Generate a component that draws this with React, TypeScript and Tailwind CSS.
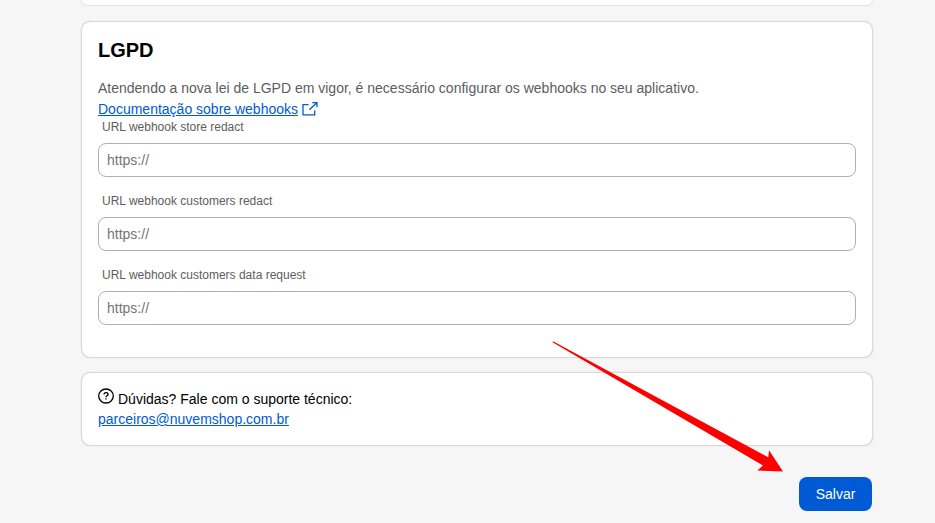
import { ReactNode } from "react";

const cardStyle = "rounded-lg bg-white p-4 shadow-[0_0_2px_0_#888888]";

function Card({ children }: { children: ReactNode }) {
  return <section className={cardStyle}>{children}</section>;
}

function ExternalLinkIcon() {
  return (
    <svg
      viewBox="0 0 16 16"
      className="h-4 w-4 shrink-0"
      fill="none"
      stroke="currentColor"
      strokeWidth="1.3"
      aria-hidden="true"
    >
      <path d="M6.5 3.6H1v10.2h11.7V9.5" />
      <path d="M10.3 1.6h4.7v4.6M14.8 1.8L7.4 8.7" />
    </svg>
  );
}

function QuestionCircleIcon() {
  return (
    <svg
      viewBox="0 1 16 16"
      className="h-4 w-4 shrink-0 overflow-visible"
      fill="none"
      stroke="currentColor"
      strokeWidth="1.3"
      aria-hidden="true"
    >
      <ellipse cx="8" cy="8" rx="7.3" ry="7" />
      <path d="M6 6.6C6 5.4 6.9 4.7 8 4.7s2 .7 2 1.7c0 1.3-2 1.4-2 2.8" />
      <path d="M8 10.2v1.4" />
    </svg>
  );
}

function UrlField({ id, label }: { id: string; label: string }) {
  return (
    <div className="mb-4 flex flex-col gap-2">
      <label htmlFor={id} className="px-1 text-xs leading-4 text-[#5d5d5d]">
        {label}
      </label>
      <input
        id={id}
        type="url"
        placeholder="https://"
        className="h-[34px] w-full rounded-lg border border-[#b0b0b0] bg-white px-2 text-sm text-[#0a0a0a] placeholder:text-[#757575]"
      />
    </div>
  );
}

export default function App() {
  return (
    <div className="relative min-h-screen bg-[#f6f6f6] pr-[63px] pb-3 pl-[82px] font-['Liberation_Sans',Arial,sans-serif] text-sm leading-5 text-black">
      <main className="flex flex-col gap-4">
        <div className="mb-px h-[5px] rounded-b-lg bg-white shadow-[0_0_2px_0_#bbbbbb]" />

        <Card>
          <h2 className="text-xl leading-6 font-bold">LGPD</h2>
          <p className="mt-4 text-[#5d5d5d]">
            Atendendo a nova lei de LGPD em vigor, é necessário configurar os webhooks no seu aplicativo.
          </p>
          <div className="flex h-[21px] items-center">
            <a href="#webhooks" className="flex items-center gap-1 text-[#0059d5]">
              <span className="underline">Documentação sobre webhooks</span>
              <ExternalLinkIcon />
            </a>
          </div>
          <UrlField id="store-redact" label="URL webhook store redact" />
          <UrlField id="customers-redact" label="URL webhook customers redact" />
          <UrlField id="customers-data-request" label="URL webhook customers data request" />
        </Card>

        <Card>
          <p className="flex items-start gap-1">
            <QuestionCircleIcon />
            <span>Dúvidas? Fale com o suporte técnico:</span>
          </p>
          <a href="mailto:parceiros@nuvemshop.com.br" className="block w-fit text-[#0059d5] underline">
            parceiros@nuvemshop.com.br
          </a>
        </Card>

        <button
          type="button"
          className="mt-4 h-[34px] w-[73px] self-end rounded-lg bg-[#0059d5] text-white"
        >
          Salvar
        </button>
      </main>

      <svg
        viewBox="0 0 232 132"
        className="pointer-events-none absolute top-[341px] left-[552px] h-[132px] w-[232px]"
        fill="#ff0000"
        aria-hidden="true"
      >
        <path d="M1 0.3L216.3 116.3L217 109.3L231 130.5L205.3 129.5L211 124.5L0.5 1.3Z" />
      </svg>
    </div>
  );
}
